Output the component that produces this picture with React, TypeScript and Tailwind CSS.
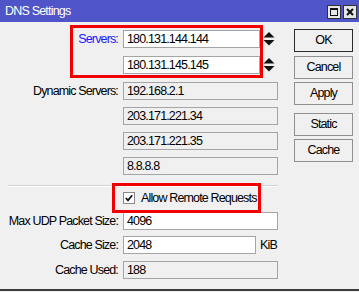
import React from "react";

function Field({ w, bg = "bg-white", children }: { w: string; bg?: string; children?: React.ReactNode }) {
  return (
    <div className={`${w} ${bg} h-[18px] border border-[#a5a5a5] flex items-center pl-[3px] leading-none whitespace-nowrap overflow-hidden`}>
      {children}
    </div>
  );
}

function Row({ label, labelClass = "text-black", mt = "", children }: { label?: string; labelClass?: string; mt?: string; children?: React.ReactNode }) {
  return (
    <div className={`flex items-center h-[18px] ${mt}`}>
      <div className={`w-[118px] text-right whitespace-nowrap leading-none ${labelClass}`}>{label}</div>
      <div className="ml-[5px] flex items-center">{children}</div>
    </div>
  );
}

function Spin() {
  return (
    <svg width="12" height="14" viewBox="0 0 12 14" className="ml-[3px]">
      <polygon points="6,0 11.5,5.5 0.5,5.5" fill="#111" />
      <polygon points="0.5,8 11.5,8 6,13.5" fill="#111" />
    </svg>
  );
}

function Btn({ label, mt = "", def = false }: { label: string; mt?: string; def?: boolean }) {
  return (
    <div
      className={`w-[59px] h-[23px] ${mt} flex items-center justify-center bg-[#f0f0f0] border ${def ? "border-[#2a2a2a]" : "border-[#8f8f8f]"} leading-none`}
    >
      {label}
    </div>
  );
}

export default function App() {
  return (
    <div className="w-[359px] h-[292px] bg-[#f0f0f0] relative overflow-hidden flex flex-col font-['Liberation_Sans',Arial,sans-serif] text-[12.5px] tracking-[-0.85px] text-black">
      <div className="h-[22px] bg-[#4f54c8] flex items-center justify-between pl-[5px] pr-[2px] shrink-0">
        <span className="text-white text-[12.5px] leading-none tracking-[-0.8px] pt-[1px]">DNS Settings</span>
        <div className="flex gap-[2px] pt-[2px]">
          <div className="w-[14px] h-[14px] bg-[#e6e6e6] border border-[#303030] flex items-center justify-center">
            <div className="w-[8px] h-[8px] border border-[#111] border-t-2" />
          </div>
          <div className="w-[14px] h-[14px] bg-[#e6e6e6] border border-[#303030] flex items-center justify-center">
            <svg width="8" height="8" viewBox="0 0 8 8">
              <path d="M1 1 L7 7 M7 1 L1 7" stroke="#111" strokeWidth="2" />
            </svg>
          </div>
        </div>
      </div>

      <div className="flex flex-1">
        <div className="w-[294px] pt-[8px] flex flex-col">
          <Row label="Servers:" labelClass="text-[#1a1aff]">
            <Field w="w-[137px]">180.131.144.144</Field>
            <Spin />
          </Row>
          <Row mt="mt-[8px]">
            <Field w="w-[137px]">180.131.145.145</Field>
            <Spin />
          </Row>
          <Row label="Dynamic Servers:" mt="mt-[8px]">
            <Field w="w-[155px]" bg="bg-[#f0f0f0]">192.168.2.1</Field>
          </Row>
          <Row mt="mt-[7px]">
            <Field w="w-[155px]" bg="bg-[#f0f0f0]">203.171.221.34</Field>
          </Row>
          <Row mt="mt-[7px]">
            <Field w="w-[155px]" bg="bg-[#f0f0f0]">203.171.221.35</Field>
          </Row>
          <Row mt="mt-[7px]">
            <Field w="w-[155px]" bg="bg-[#f0f0f0]">8.8.8.8</Field>
          </Row>

          <div className="mt-[10px] ml-[8px] w-[270px] h-[2px] border-t border-[#d4d4d4] border-b border-b-white" />

          <Row mt="mt-[2px]">
            <div className="flex items-center">
              <div className="w-[12px] h-[12px] bg-white border border-[#8a8a8a] flex items-center justify-center">
                <svg width="8" height="8" viewBox="0 0 8 8">
                  <path d="M0.8 4 L3 6.3 L7.2 1.2" fill="none" stroke="#111" strokeWidth="1.8" />
                </svg>
              </div>
              <span className="ml-[6px] leading-none whitespace-nowrap">Allow Remote Requests</span>
            </div>
          </Row>

          <Row label="Max UDP Packet Size:" mt="mt-[5px]">
            <Field w="w-[155px]">4096</Field>
          </Row>
          <Row label="Cache Size:" mt="mt-[6px]">
            <Field w="w-[133px]">2048</Field>
            <span className="ml-[4px] leading-none">KiB</span>
          </Row>
          <Row label="Cache Used:" mt="mt-[7px]">
            <Field w="w-[155px]" bg="bg-[#f0f0f0]">188</Field>
          </Row>
        </div>

        <div className="flex flex-col pt-[7px]">
          <Btn label="OK" def />
          <Btn label="Cancel" mt="mt-[4px]" />
          <Btn label="Apply" mt="mt-[3px]" />
          <Btn label="Static" mt="mt-[8px]" />
          <Btn label="Cache" mt="mt-[3px]" />
        </div>
      </div>

      <div className="h-[2px] bg-[#3c3c3c] shrink-0 mb-[1px]" />

      <div className="absolute left-[70px] top-[25px] w-[193px] h-[53px] border-[3px] border-[#f00000] pointer-events-none" />
      <div className="absolute left-[112px] top-[183px] w-[149px] h-[30px] border-[3px] border-[#f00000] pointer-events-none" />
    </div>
  );
}
